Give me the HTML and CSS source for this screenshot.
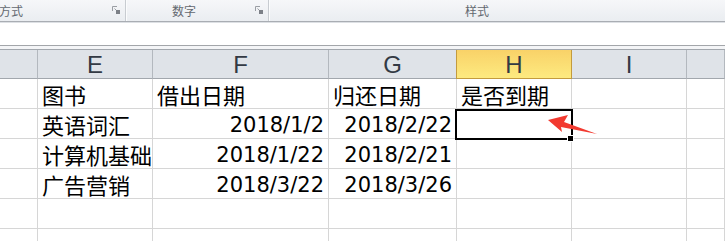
FILE: index.html
```html
<!DOCTYPE html>
<html lang="zh-CN">
<head>
    <meta charset="UTF-8">
    <meta name="viewport" content="width=device-width, initial-scale=1.0">
    <title>图书到期表</title>
    <link rel="stylesheet" href="styles.css">
</head>
<body>
    <div class="ribbon">
        <div class="group group-align">
            <span class="group-name">方式</span>
            <svg class="launcher" width="8" height="8" viewBox="0 0 8 8">
                <path d="M0.5 5V0.5H5" fill="none" stroke="#9a9ea4"/>
                <path d="M2.5 2.5L6 6" stroke="#9a9ea4"/>
                <rect x="4" y="4" width="4" height="4" fill="#7c8087"/>
            </svg>
        </div>
        <div class="group group-number">
            <span class="group-name">数字</span>
            <svg class="launcher" width="8" height="8" viewBox="0 0 8 8">
                <path d="M0.5 5V0.5H5" fill="none" stroke="#9a9ea4"/>
                <path d="M2.5 2.5L6 6" stroke="#9a9ea4"/>
                <rect x="4" y="4" width="4" height="4" fill="#7c8087"/>
            </svg>
        </div>
        <div class="group group-style">
            <span class="group-name">样式</span>
        </div>
    </div>

    <div class="formula-bar"></div>
    <div class="band"></div>

    <div class="sheet">
        <div class="col-head"></div>
        <div class="col-head">E</div>
        <div class="col-head">F</div>
        <div class="col-head">G</div>
        <div class="col-head active">H</div>
        <div class="col-head">I</div>
        <div class="col-head"></div>

        <div class="cell"></div>
        <div class="cell">图书</div>
        <div class="cell">借出日期</div>
        <div class="cell">归还日期</div>
        <div class="cell">是否到期</div>
        <div class="cell"></div>
        <div class="cell"></div>

        <div class="cell"></div>
        <div class="cell">英语词汇</div>
        <div class="cell num">2018/1/2</div>
        <div class="cell num">2018/2/22</div>
        <div class="cell"></div>
        <div class="cell"></div>
        <div class="cell"></div>

        <div class="cell"></div>
        <div class="cell">计算机基础</div>
        <div class="cell num">2018/1/22</div>
        <div class="cell num">2018/2/21</div>
        <div class="cell"></div>
        <div class="cell"></div>
        <div class="cell"></div>

        <div class="cell"></div>
        <div class="cell">广告营销</div>
        <div class="cell num">2018/3/22</div>
        <div class="cell num">2018/3/26</div>
        <div class="cell"></div>
        <div class="cell"></div>
        <div class="cell"></div>

        <div class="cell"></div>
        <div class="cell"></div>
        <div class="cell"></div>
        <div class="cell"></div>
        <div class="cell"></div>
        <div class="cell"></div>
        <div class="cell"></div>

        <div class="cell last"></div>
        <div class="cell last"></div>
        <div class="cell last"></div>
        <div class="cell last"></div>
        <div class="cell last"></div>
        <div class="cell last"></div>
        <div class="cell last"></div>

        <!-- 选中单元格 H2 -->
        <div class="selection">
            <span class="fill-handle"></span>
        </div>

        <svg class="arrow" width="60" height="30" viewBox="0 0 60 30">
            <polygon points="3,10 23,5 19,12 52,24 16,17 17,22" fill="#f23a30"/>
        </svg>
    </div>
</body>
</html>
```

FILE: styles.css
```css
body {
    margin: 0;
    width: 725px;
    height: 241px;
    overflow: hidden;
    background: #fff;
    font-family: "Noto Sans CJK SC", sans-serif;
}

.ribbon {
    display: flex;
    height: 21px;
    background: linear-gradient(#f6f7f9, #eaedf1);
    border-bottom: 1px solid #a9adb3;
    box-shadow: 0 1px 0 #dde0e4;
}

.group {
    position: relative;
    display: flex;
    align-items: center;
    justify-content: center;
    box-sizing: border-box;
    border-right: 1px solid #c8ccd1;
    box-shadow: 1px 0 0 #fbfcfd;
}

.group-align {
    width: 126px;
    justify-content: flex-start;
}

.group-number {
    width: 143px;
}

.group-style {
    flex: 1;
    border-right: none;
    box-shadow: none;
    padding-left: 196px;
    justify-content: flex-start;
}

.group-name {
    font-size: 12px;
    line-height: 1;
    color: #636870;
    margin-top: 1px;
}

.group-align .group-name {
    margin-left: -1px;
}

.group-number .group-name {
    margin-left: -26px;
}

.launcher {
    position: absolute;
    right: 5px;
    top: 6px;
}

.formula-bar {
    height: 22px;
    margin-top: 1px;
    background: #fff;
    border-bottom: 1px solid #a3a6aa;
}

.band {
    height: 3px;
    background: #f4f5f7;
}

.sheet {
    position: relative;
    display: grid;
    grid-template-columns: 38px 115px 176px 128px 115px 115px 1fr;
    grid-template-rows: 29px repeat(5, 30px) 12px;
    border-top: 1px solid #a2a7ad;
}

.col-head {
    box-sizing: border-box;
    display: flex;
    align-items: center;
    justify-content: center;
    background: #dfe3e8;
    border-right: 1px solid #b3b8be;
    border-bottom: 1px solid #a2a7ad;
    font-family: "Liberation Sans Narrow", "Liberation Sans", sans-serif;
    font-size: 24px;
    line-height: 1;
    color: #333a44;
    padding-top: 2px;
}

.col-head.active {
    background: linear-gradient(#f9d268, #fdea80);
    border: 1px solid #c39b3e;
    border-top: none;
    margin-left: -1px;
}

.cell {
    box-sizing: border-box;
    display: flex;
    align-items: flex-end;
    padding: 0 4px 3px;
    border-right: 1px solid #d6d6d6;
    border-bottom: 1px solid #d6d6d6;
    font-size: 22px;
    line-height: 1;
    color: #000;
    white-space: nowrap;
    overflow: hidden;
}

.cell.last {
    border-bottom: none;
}

.cell.num {
    justify-content: flex-end;
    font-family: "DejaVu Sans", sans-serif;
    font-size: 21px;
    padding-right: 4px;
    padding-bottom: 2px;
}

.selection {
    position: absolute;
    left: 455px;
    top: 59px;
    width: 118px;
    height: 31px;
    box-sizing: border-box;
    border: 2px solid #000;
}

.fill-handle {
    position: absolute;
    right: -3px;
    bottom: -4px;
    width: 5px;
    height: 5px;
    background: #000;
    border: 1px solid #fff;
}

.arrow {
    position: absolute;
    left: 545px;
    top: 60px;
}
```
